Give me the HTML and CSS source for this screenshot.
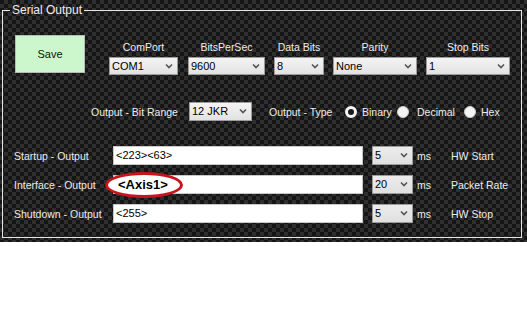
FILE: index.html
```html
<!DOCTYPE html>
<html lang="en">

<head>
  <meta charset="UTF-8">
  <title>Serial Output</title>
  <link rel="stylesheet" href="styles.css">
</head>

<body>
  <div class="panel">
    <fieldset class="group">
      <legend>Serial Output</legend>

      <div class="top-row">
        <button class="save-btn">Save</button>
        <div class="field w-com">
          <div class="field-label">ComPort</div>
          <div class="combo"><span>COM1</span><svg class="chev" viewBox="0 0 8 6"><path d="M1 1.5 L4 4.5 L7 1.5" /></svg></div>
        </div>
        <div class="field w-bps">
          <div class="field-label">BitsPerSec</div>
          <div class="combo"><span>9600</span><svg class="chev" viewBox="0 0 8 6"><path d="M1 1.5 L4 4.5 L7 1.5" /></svg></div>
        </div>
        <div class="field w-data">
          <div class="field-label">Data Bits</div>
          <div class="combo"><span>8</span><svg class="chev" viewBox="0 0 8 6"><path d="M1 1.5 L4 4.5 L7 1.5" /></svg></div>
        </div>
        <div class="field w-par">
          <div class="field-label">Parity</div>
          <div class="combo"><span>None</span><svg class="chev" viewBox="0 0 8 6"><path d="M1 1.5 L4 4.5 L7 1.5" /></svg></div>
        </div>
        <div class="field w-stop">
          <div class="field-label">Stop Bits</div>
          <div class="combo"><span>1</span><svg class="chev" viewBox="0 0 8 6"><path d="M1 1.5 L4 4.5 L7 1.5" /></svg></div>
        </div>
      </div>

      <div class="range-row">
        <span class="range-label">Output - Bit Range</span>
        <div class="combo w-range"><span>12 JKR</span><svg class="chev" viewBox="0 0 8 6"><path d="M1 1.5 L4 4.5 L7 1.5" /></svg></div>
        <span class="type-label">Output - Type</span>
        <span class="radio checked"></span><span class="radio-text t-bin">Binary</span>
        <span class="radio"></span><span class="radio-text t-dec">Decimal</span>
        <span class="radio"></span><span class="radio-text">Hex</span>
      </div>

      <div class="out-rows">
        <span class="row-label">Startup - Output</span>
        <div class="text-box">&lt;223&gt;&lt;63&gt;</div>
        <div class="combo small"><span>5</span><svg class="chev" viewBox="0 0 8 6"><path d="M1 1.5 L4 4.5 L7 1.5" /></svg></div>
        <span class="unit">ms</span>
        <span class="row-note">HW Start</span>

        <span class="row-label">Interface - Output</span>
        <div class="text-box marked">
          <div class="ring">&lt;Axis1&gt;</div>
        </div>
        <div class="combo small"><span>20</span><svg class="chev" viewBox="0 0 8 6"><path d="M1 1.5 L4 4.5 L7 1.5" /></svg></div>
        <span class="unit">ms</span>
        <span class="row-note">Packet Rate</span>

        <span class="row-label">Shutdown - Output</span>
        <div class="text-box">&lt;255&gt;</div>
        <div class="combo small"><span>5</span><svg class="chev" viewBox="0 0 8 6"><path d="M1 1.5 L4 4.5 L7 1.5" /></svg></div>
        <span class="unit">ms</span>
        <span class="row-note">HW Stop</span>
      </div>
    </fieldset>
  </div>
</body>

</html>
```

FILE: styles.css
```css
body {
  margin: 0;
  background-color: #ffffff;
  font-family: 'Liberation Sans', Arial, sans-serif;
  font-size: 10.5px;
}

.panel {
  height: 242px;
  box-sizing: border-box;
  padding: 3px 5px 0 2px;
  background-color: #1e1e1e;
  background-image: conic-gradient(#2f2f2f 25%, #151515 0 50%, #2f2f2f 0 75%, #151515 0);
  background-size: 8px 8px;
}

.group {
  margin: 0;
  padding: 0;
  min-width: 0;
  height: 235px;
  box-sizing: border-box;
  border: 1px solid #e6e6e6;
}

.group legend {
  margin-left: 7px;
  padding: 0 2px;
  line-height: 14px;
  font-size: 12px;
  color: #ececec;
}

.top-row {
  display: flex;
  align-items: flex-start;
  margin-top: 18px;
  padding-left: 12px;
}

.save-btn {
  width: 70px;
  height: 38px;
  margin: 0 24px 0 0;
  padding: 0;
  border: 1px solid #b8b8b8;
  background-color: #ccf7cc;
  font-family: inherit;
  font-size: 11px;
  color: #111;
}

.field {
  display: flex;
  flex-direction: column;
  padding-top: 5px;
  margin-right: 9px;
}

.field-label {
  text-align: center;
  line-height: 14px;
  margin-bottom: 3px;
  color: #ececec;
}

.w-com { width: 69px; margin-right: 10px; }
.w-bps { width: 77px; }
.w-data { width: 50px; }
.w-par { width: 84px; }
.w-stop { width: 84px; }

.combo {
  position: relative;
  height: 18px;
  box-sizing: border-box;
  border: 1px solid #9c9c9c;
  background: linear-gradient(#f4f4f4, #e2e2e2);
  padding-left: 2px;
  line-height: 16px;
  color: #000;
  font-size: 11px;
}

.chev {
  position: absolute;
  right: 4px;
  top: 5px;
  width: 8px;
  height: 6px;
  fill: none;
  stroke: #555;
  stroke-width: 1.6;
}

.range-row {
  display: flex;
  align-items: center;
  margin-top: 27px;
  padding-left: 88px;
  height: 19px;
  color: #ececec;
}

.range-label { width: 98px; }

.w-range {
  width: 63px;
  height: 19px;
  margin-right: 17px;
  line-height: 17px;
}

.type-label { width: 76px; }

.radio {
  width: 12px;
  height: 12px;
  box-sizing: border-box;
  border-radius: 50%;
  background-color: #f4f4f4;
  border: 1px solid #cfcfcf;
  margin-right: 5px;
}

.radio.checked {
  background-color: #1a1a1a;
  border: 3px solid #f4f4f4;
}

.t-bin { width: 35px; }
.t-dec { width: 47px; margin-left: 3px; }

.out-rows {
  display: grid;
  grid-template-columns: 99px 250px 50px 38px auto;
  grid-auto-rows: 19px;
  row-gap: 10px;
  align-items: center;
  margin-top: 25px;
  padding-left: 11px;
  color: #ececec;
}

.text-box {
  position: relative;
  height: 19px;
  box-sizing: border-box;
  border: 1px solid #c8c8c8;
  background-color: #fff;
  padding-left: 2px;
  line-height: 17px;
  color: #000;
  font-size: 11px;
}

.combo.small {
  height: 19px;
  line-height: 17px;
  margin-left: 9px;
  background: linear-gradient(#ececec, #e0e0e0);
}

.unit { padding-left: 4px; }

.ring {
  position: absolute;
  left: -9px;
  top: -4px;
  width: 78px;
  height: 26px;
  box-sizing: border-box;
  border: 3px solid #c8141c;
  border-radius: 50%;
  background-color: #fff;
  padding-left: 10px;
  line-height: 20px;
  font-size: 13px;
  font-weight: bold;
  color: #000;
}
```
